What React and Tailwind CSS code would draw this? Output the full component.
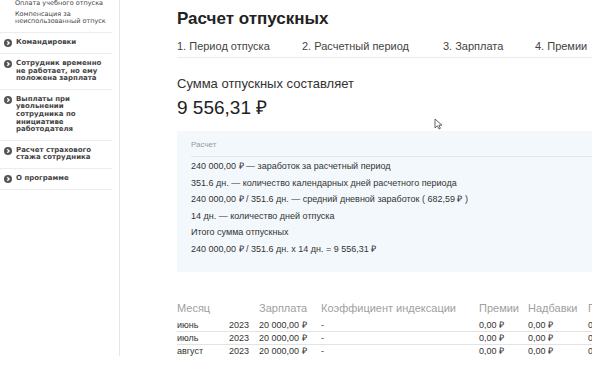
import React from "react";

// sidebar entries with an arrow bullet
const menu = [
  ["Командировки"],
  ["Сотрудник временно", "не работает, но ему", "положена зарплата"],
  ["Выплаты при", "увольнении", "сотрудника по", "инициативе", "работодателя"],
  ["Расчет страхового", "стажа сотрудника"],
  ["О программе"],
];

const calcLines = [
  "240 000,00 ₽ — заработок за расчетный период",
  "351.6 дн. — количество календарных дней расчетного периода",
  "240 000,00 ₽ / 351.6 дн. — средний дневной заработок ( 682,59 ₽ )",
  "14 дн. — количество дней отпуска",
  "Итого сумма отпускных",
  "240 000,00 ₽ / 351.6 дн. x 14 дн. = 9 556,31 ₽",
];

const rows = [
  { month: "июнь", year: "2023" },
  { month: "июль", year: "2023" },
  { month: "август", year: "2023" },
];

function Bullet() {
  return (
    <svg width="8" height="8" viewBox="0 0 8 8" className="shrink-0">
      <circle cx="4" cy="4" r="4" fill="#555" />
      <path d="M3.3 2.2 L5.1 4 L3.3 5.8" stroke="#fff" strokeWidth="1.3" fill="none" />
    </svg>
  );
}

function Sidebar() {
  return (
    <div className="w-[120px] h-[356px] shrink-0 border-r border-[#e6e6e6] pr-[7px] font-['DejaVu_Sans',sans-serif]">
      <div className="pl-[15px] pb-[7px] border-b border-[#ececec] text-[6.5px] leading-[7px] text-[#444]">
        <div className="mb-[4px]">Оплата учебного отпуска</div>
        <div>Компенсация за</div>
        <div>неиспользованный отпуск</div>
      </div>
      {menu.map((lines, i) => (
        <div key={i} className="flex gap-[4px] pl-[4px] py-[6px] border-b border-[#ececec]">
          <Bullet />
          <div className="text-[7px] leading-[7.6px] font-bold text-[#444]">
            {lines.map((l, j) => (
              <div key={j}>{l}</div>
            ))}
          </div>
        </div>
      ))}
    </div>
  );
}

export default function App() {
  return (
    <div className="relative flex w-[600px] h-[387px] overflow-hidden bg-white">
      <Sidebar />

      <div className="ml-[57px] w-[415px] overflow-hidden font-['Liberation_Sans',Arial,sans-serif] text-[#333]">
        <h1 className="mt-[7px] text-[17px] leading-[24px] font-bold text-[#222]">Расчет отпускных</h1>

        {/* steps */}
        <div className="mt-[8px] flex border-b border-[#eaeaea] pb-[4px] text-[11px] leading-[14px] text-[#444] whitespace-nowrap">
          <div className="w-[125px] shrink-0">1. Период отпуска</div>
          <div className="w-[141px] shrink-0">2. Расчетный период</div>
          <div className="w-[92px] shrink-0">3. Зарплата</div>
          <div className="shrink-0">4. Премии</div>
        </div>

        <div className="mt-[17px] text-[13px] leading-[18px]">Сумма отпускных составляет</div>
        <div className="mt-[3px] text-[19px] leading-[24px] text-[#222]">9 556,31 ₽</div>

        {/* calculation box */}
        <div className="mt-[11px] w-[415px] bg-[#f3f8fc] pl-[14px] pt-[9px] pb-[14px]">
          <div className="text-[8px] leading-[10px] text-[#9a9a9a]">Расчет</div>
          <div className="mt-[6px] border-t border-[#dfe6ec] pt-[1px] text-[9px] leading-[16.6px] text-[#333] whitespace-nowrap">
            {calcLines.map((l, i) => (
              <div key={i}>{l}</div>
            ))}
          </div>
        </div>

        {/* salary table */}
        <div className="mt-[28px] w-[440px] whitespace-nowrap">
          <div className="grid grid-cols-[52px_30px_62px_158px_49px_60px_1fr] text-[11px] leading-[16px] text-[#a0a0a0]">
            <div>Месяц</div>
            <div></div>
            <div>Зарплата</div>
            <div>Коэффициент индексации</div>
            <div>Премии</div>
            <div>Надбавки</div>
            <div>П</div>
          </div>
          <div className="mt-[3px] text-[9px] leading-[12px] text-[#333]">
            {rows.map((r, i) => (
              <div
                key={i}
                className={
                  "grid grid-cols-[52px_30px_62px_158px_49px_60px_1fr] " +
                  (i < rows.length - 1 ? "border-b border-[#e3e3e3]" : "")
                }
              >
                <div>{r.month}</div>
                <div>{r.year}</div>
                <div>20 000,00 ₽</div>
                <div>-</div>
                <div>0,00 ₽</div>
                <div>0,00 ₽</div>
                <div>0</div>
              </div>
            ))}
          </div>
        </div>
      </div>

      {/* mouse pointer */}
      <svg className="absolute left-[434px] top-[118px]" width="9" height="12" viewBox="0 0 9 12">
        <path d="M1 1 L1 10 L3.4 7.8 L5 11 L6.4 10.3 L4.9 7.2 L8 7.2 Z" fill="#fff" stroke="#555" strokeWidth="0.9" />
      </svg>
    </div>
  );
}
